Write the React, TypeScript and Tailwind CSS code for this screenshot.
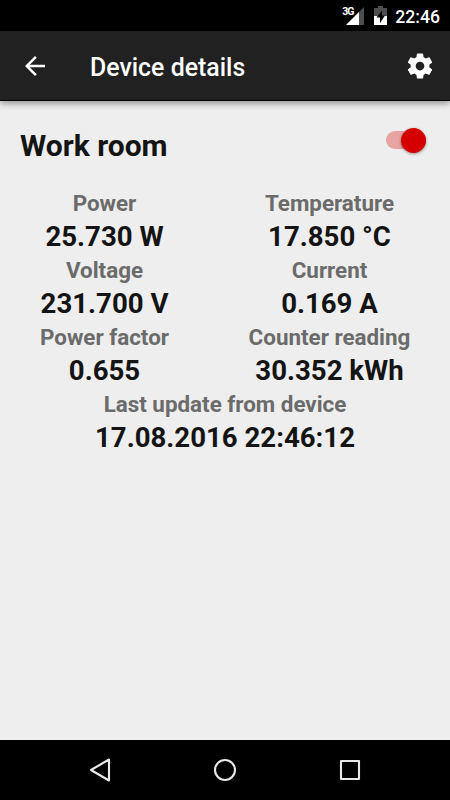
import clsx from 'clsx';

interface ReadingProps {
  label: string;
  value: string;
  className?: string;
}

const readings = [
  { label: 'Power', value: '25.730 W' },
  { label: 'Temperature', value: '17.850 °C' },
  { label: 'Voltage', value: '231.700 V' },
  { label: 'Current', value: '0.169 A' },
  { label: 'Power factor', value: '0.655' },
  { label: 'Counter reading', value: '30.352 kWh' },
];

const Reading = ({ label, value, className }: ReadingProps) => (
  <div className={clsx('h-[67px] text-center font-bold whitespace-nowrap', className)}>
    <div className="h-[30px] text-[22.4px] leading-[30px] text-[#6b6b6b]">{label}</div>
    <div className="h-[37px] text-[27.6px] leading-[38px] text-[#141414]">{value}</div>
  </div>
);

const StatusBar = () => (
  <div className="flex h-[31px] items-start justify-end bg-black pr-[10px] text-white">
    <span className="mt-[6px] mr-[-7px] text-[10.5px] leading-[11px] font-bold tracking-[-1px]">3G</span>
    <svg className="mt-[7px] h-[18px] w-[18px]" viewBox="0 0 18 18">
      <path d="M18 0V18H0Z" fill="#4d4d4d" />
      <path d="M13 5V18H0Z" fill="#fff" />
    </svg>
    <svg className="mt-[6px] ml-[10px] h-[19px] w-[13px]" viewBox="0 0 13 19">
      <path d="M4 0h5v2h4v8H0V2h4z" fill="#4d4d4d" />
      <path d="M0 10h13v9H0z" fill="#fff" />
      <path d="M8 4.5 2.5 11.5H6v5.5l5-7.5H8z" fill="#000" />
    </svg>
    <span className="ml-[8px] text-[17.6px] leading-[34px] font-medium">22:46</span>
  </div>
);

const AppBar = () => (
  <header className="relative flex h-[70px] items-center border-b border-black bg-[#212121] pr-[15px] pl-5 text-white shadow-[0_3px_6px_rgba(0,0,0,0.35)]">
    <svg className="h-[30px] w-[30px]" viewBox="0 0 24 24" fill="currentColor">
      <path d="M20 11H7.83l5.59-5.59L12 4l-8 8 8 8 1.41-1.41L7.83 13H20v-2z" />
    </svg>
    <h1 className="mt-[5px] ml-10 flex-1 text-[24.9px] font-medium">Device details</h1>
    <svg className="h-[30px] w-[30px]" viewBox="0 0 24 24" fill="currentColor">
      <path d="M19.43 12.98c.04-.32.07-.64.07-.98s-.03-.66-.07-.98l2.11-1.65c.19-.15.24-.42.12-.64l-2-3.46c-.12-.22-.39-.3-.61-.22l-2.49 1c-.52-.4-1.08-.73-1.69-.98l-.38-2.65C14.46 2.18 14.25 2 14 2h-4c-.25 0-.46.18-.49.42l-.38 2.65c-.61.25-1.17.59-1.69.98l-2.49-1c-.23-.09-.49 0-.61.22l-2 3.46c-.13.22-.07.49.12.64l2.11 1.65c-.04.32-.07.65-.07.98s.03.66.07.98l-2.11 1.65c-.19.15-.24.42-.12.64l2 3.46c.12.22.39.3.61.22l2.49-1c.52.4 1.08.73 1.69.98l.38 2.65c.03.24.24.42.49.42h4c.25 0 .46-.18.49-.42l.38-2.65c.61-.25 1.17-.59 1.69-.98l2.49 1c.23.09.49 0 .61-.22l2-3.46c.12-.22.07-.49-.12-.64l-2.11-1.65zM12 15.5c-1.93 0-3.5-1.57-3.5-3.5s1.57-3.5 3.5-3.5 3.5 1.57 3.5 3.5-1.57 3.5-3.5 3.5z" />
    </svg>
  </header>
);

const Switch = () => (
  <button role="switch" aria-checked="true" aria-label="Work room" className="-mt-px flex h-[26px] w-10 items-center">
    <span className="h-[18px] w-10 rounded-full bg-[#e8a3a3]" />
    <span className="-ml-[25px] h-[25px] w-[25px] shrink-0 rounded-full bg-[#d40000] shadow-[0_1px_3px_rgba(0,0,0,0.4)]" />
  </button>
);

const NavBar = () => (
  <nav className="flex h-[60px] items-center justify-between bg-black px-[85px]">
    <svg className="h-[30px] w-[30px]" viewBox="0 0 30 30" fill="none" stroke="#e8e8e8" strokeWidth="2.1" strokeLinejoin="round">
      <path d="M24 4.5v21L6 15z" />
    </svg>
    <svg className="h-[30px] w-[30px]" viewBox="0 0 30 30" fill="none" stroke="#e8e8e8" strokeWidth="2.1">
      <circle cx="15" cy="15" r="10" />
    </svg>
    <svg className="h-[30px] w-[30px]" viewBox="0 0 30 30" fill="none" stroke="#e8e8e8" strokeWidth="2.1" strokeLinejoin="round">
      <path d="M6 6h18v18H6z" />
    </svg>
  </nav>
);

export default function App() {
  return (
    <div className="flex h-[800px] w-[450px] flex-col overflow-hidden bg-[#eeeeee] font-['Roboto',sans-serif]">
      <StatusBar />
      <AppBar />
      <main className="flex-1">
        <div className="flex h-[87px] items-start justify-between pt-[27px] pr-[24.5px] pl-5">
          <h2 className="text-[30px] leading-[36px] font-bold text-[#141414]">Work room</h2>
          <Switch />
        </div>
        <div className="grid grid-cols-[209px_241px]">
          {readings.map((r) => (
            <Reading key={r.label} label={r.label} value={r.value} />
          ))}
          <Reading label="Last update from device" value="17.08.2016 22:46:12" className="col-span-2" />
        </div>
      </main>
      <NavBar />
    </div>
  );
}
